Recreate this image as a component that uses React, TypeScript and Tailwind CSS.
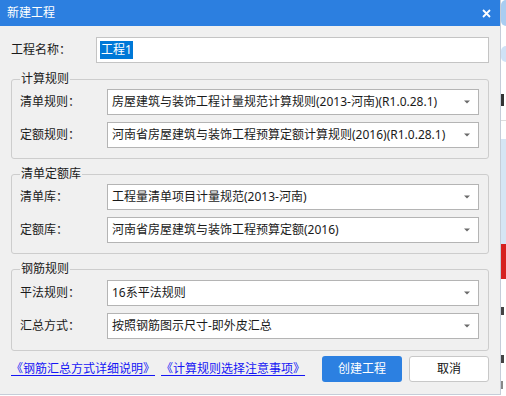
import React from 'react'

const font = "font-['Noto_Sans','Noto_Sans_CJK_SC',sans-serif]"

function Select({ value }: { value: string }) {
  return (
    <div className="flex-1 h-[26px] flex items-center bg-white border border-[#b4b4b4] pl-[4px] pr-[8px]">
      <span className="flex-1 text-[12px] leading-[16px] text-[#1a1a1a] whitespace-nowrap">{value}</span>
      <svg width="6" height="4" viewBox="0 0 6 4" className="shrink-0">
        <path d="M0 0.5 L6 0.5 L3 3.5 Z" fill="#6a6a6a" />
      </svg>
    </div>
  )
}

function Row({ label, value }: { label: string; value: string }) {
  return (
    <div className="flex items-center">
      <span className="w-[87px] text-[12px] leading-[16px] text-[#1a1a1a]">{label}</span>
      <Select value={value} />
    </div>
  )
}

function Group({
  title,
  rows,
  className,
}: {
  title: string
  rows: { label: string; value: string }[]
  className: string
}) {
  return (
    <fieldset className={`mx-[11px] border border-[#cdcdcd] rounded-[3px] pl-[8px] pr-[9px] ${className}`}>
      <legend className="px-[1px] text-[12px] leading-[16px] text-[#1a1a1a]">{title}</legend>
      <div className="flex flex-col gap-[7px]">
        {rows.map((r) => (
          <Row key={r.label} label={r.label} value={r.value} />
        ))}
      </div>
    </fieldset>
  )
}

// the sliver of the window behind the dialog
function SideStrip() {
  return (
    <div className="flex-1 flex flex-col bg-white">
      <div className="h-[26px] bg-[#a9cdf1] rounded-l-full" />
      <div className="h-[20px]" />
      <div className="h-[16px] bg-[#cfe2f6] rounded-l-full" />
      <div className="h-[32px]" />
      <div className="h-[12px] w-[3px] bg-[#333]" />
      <div className="h-[14px]" />
      <div className="h-px bg-[#dcdcdc]" />
      <div className="h-[18px]" />
      <div className="h-[105px] bg-[#d5e5f4]" />
      <div className="h-[35px] bg-[#d61f1f]" />
      <div className="h-[28px]" />
      <div className="h-[8px] w-[3px] bg-[#444]" />
      <div className="h-[40px]" />
      <div className="h-[8px] w-[3px] bg-[#444]" />
      <div className="h-[18px]" />
      <div className="h-[8px] w-[2px] bg-[#888]" />
    </div>
  )
}

export default function App() {
  return (
    <div className={`flex w-[506px] h-[396px] bg-white ${font}`}>
      <div className="w-[501px] h-[395px] flex flex-col bg-[#f0f0f0] border-r border-b border-[#c5cdd8]">
        <div className="h-[26px] shrink-0 bg-[#2c7fe0] flex items-center pl-[7px] pr-[9px]">
          <span className="flex-1 text-[12px] leading-[16px] text-white">新建工程</span>
          <svg width="9" height="9" viewBox="0 0 9 9">
            <path d="M1 1 L8 8 M8 1 L1 8" stroke="#ffffff" strokeWidth="1.8" />
          </svg>
        </div>

        <div className="flex items-center mt-[11px] pl-[11px] pr-[11px]">
          <span className="w-[85px] text-[12px] leading-[16px] text-[#1a1a1a]">工程名称：</span>
          <div className="flex-1 h-[26px] flex items-center bg-white border border-[#c4c4c4] pl-[3px]">
            <span className="bg-[#0078d7] text-white text-[12px] leading-[18px] px-px">工程1</span>
          </div>
        </div>

        <Group
          title="计算规则"
          className="mt-[8px] pt-[2px] pb-[10px]"
          rows={[
            { label: '清单规则：', value: '房屋建筑与装饰工程计量规范计算规则(2013-河南)(R1.0.28.1)' },
            { label: '定额规则：', value: '河南省房屋建筑与装饰工程预算定额计算规则(2016)(R1.0.28.1)' },
          ]}
        />
        <Group
          title="清单定额库"
          className="mt-[7px] pt-[2px] pb-[10px]"
          rows={[
            { label: '清单库：', value: '工程量清单项目计量规范(2013-河南)' },
            { label: '定额库：', value: '河南省房屋建筑与装饰工程预算定额(2016)' },
          ]}
        />
        <Group
          title="钢筋规则"
          className="mt-[7px] pt-[3px] pb-[11px]"
          rows={[
            { label: '平法规则：', value: '16系平法规则' },
            { label: '汇总方式：', value: '按照钢筋图示尺寸-即外皮汇总' },
          ]}
        />

        <div className="flex items-center mt-[5px] pl-[11px] pr-[11px]">
          <a className="text-[12px] leading-[16px] text-[#1515f5] underline underline-offset-2">《钢筋汇总方式详细说明》</a>
          <a className="ml-[6px] text-[12px] leading-[16px] text-[#1515f5] underline underline-offset-2">《计算规则选择注意事项》</a>
          <div className="flex-1" />
          <button className="w-[80px] h-[26px] rounded-[3px] bg-[#2c80e1] text-white text-[12px] leading-[16px]">创建工程</button>
          <button className="ml-[7px] w-[80px] h-[26px] rounded-[3px] bg-white border border-[#c8c8c8] text-[#111] text-[12px] leading-[16px]">取消</button>
        </div>
      </div>
      <SideStrip />
    </div>
  )
}
